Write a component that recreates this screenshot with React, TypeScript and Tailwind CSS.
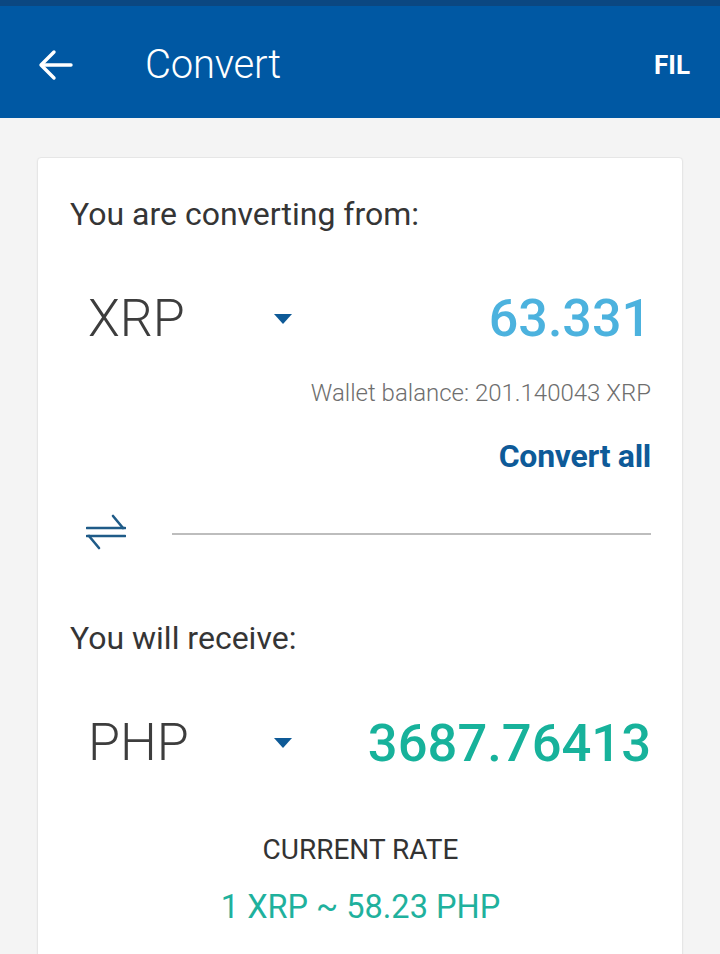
import React from "react";

function Caret() {
  return (
    <svg width="18" height="10" viewBox="0 0 18 10" className="block">
      <path d="M0 0 L18 0 L9 10 Z" fill="#0e5a97" />
    </svg>
  );
}

function SwapIcon() {
  return (
    <svg width="40" height="36" viewBox="0 0 40 36" className="block">
      <g stroke="#1f5b88" strokeWidth="2.6" fill="none" strokeLinecap="round">
        <path d="M1 14 L39 14" />
        <path d="M37 14 L27 2" />
        <path d="M39 22 L1 22" />
        <path d="M3 22 L13 34" />
      </g>
    </svg>
  );
}

export default function App() {
  return (
    <div
      className="w-[720px] h-[954px] overflow-hidden bg-[#f4f4f4]"
      style={{ fontFamily: "Roboto, 'Noto Sans', sans-serif" }}
    >
      <div className="h-[6px] bg-[#0b4781]" />
      <div className="h-[112px] bg-[#0058a3] flex items-center pt-[6px]">
        <div className="w-[145px] pl-[38px] flex items-center">
          <svg width="36" height="32" viewBox="0 0 36 32" className="block">
            <g stroke="#ffffff" strokeWidth="3.4" fill="none" strokeLinecap="round" strokeLinejoin="round">
              <path d="M33 16 L4 16" />
              <path d="M16 3 L3 16 L16 29" />
            </g>
          </svg>
        </div>
        <div className="text-white text-[40px] font-light leading-[48px] tracking-[-0.2px]">Convert</div>
        <div className="ml-auto pr-[30px] text-white text-[26px] font-bold leading-[32px]">FIL</div>
      </div>

      <div className="mx-[37px] mt-[39px] bg-white border border-[#e6e6e6] rounded-[4px] h-[900px] shadow-[0_1px_2px_rgba(0,0,0,0.06)]">
        <div className="pl-[32px] pr-[31px] pt-[38px]">
          <div className="text-[32px] leading-[36px] text-[#353535]">You are converting from:</div>

          <div className="mt-[57px] flex items-center h-[60px]">
            <div className="w-[222px] pl-[18px] flex items-center justify-between">
              <span className="text-[52px] font-light leading-[60px] text-[#3d3d3d]">XRP</span>
              <Caret />
            </div>
            <div className="ml-auto text-[52px] font-medium leading-[60px] text-[#4cb2de]">63.331</div>
          </div>

          <div className="mt-[29px] text-right text-[24px] font-light leading-[30px] text-[#6e6e6e]">
            Wallet balance: 201.140043 XRP
          </div>

          <div className="mt-[31px] text-right text-[32px] font-bold leading-[34px] text-[#0e5a98] tracking-[-0.3px]">Convert all</div>

          <div className="mt-[39px] flex items-center h-[40px]">
            <div className="w-[102px] pl-[16px]">
              <SwapIcon />
            </div>
            <div className="flex-1 h-[2px] mt-[4px] bg-[#bdbdbd]" />
          </div>

          <div className="mt-[68px] text-[32px] leading-[36px] text-[#353535]">You will receive:</div>

          <div className="mt-[57px] flex items-center h-[60px]">
            <div className="w-[222px] pl-[18px] flex items-center justify-between">
              <span className="text-[52px] font-light leading-[60px] text-[#3d3d3d]">PHP</span>
              <Caret />
            </div>
            <div className="ml-auto text-[52.5px] font-medium leading-[60px] text-[#17b29b]">3687.76413</div>
          </div>

          <div className="mt-[61px] text-center text-[28px] leading-[32px] text-[#333333]">CURRENT RATE</div>
          <div className="mt-[22px] text-center text-[32.5px] leading-[38px] text-[#1fb19d]">1 XRP ~ 58.23 PHP</div>
        </div>
      </div>
    </div>
  );
}
